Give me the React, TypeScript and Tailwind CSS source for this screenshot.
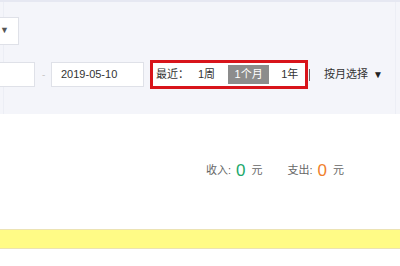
import React from 'react';

export default function App() {
  return (
    <div
      className="w-[400px] h-[266px] overflow-hidden bg-white text-[#333]"
      style={{ fontFamily: '"Liberation Sans", "Noto Sans CJK SC", sans-serif' }}
    >
      {/* Filter panel */}
      <div className="h-[114px] bg-[#f4f5fa] border-t-2 border-[#e6e8f2] pl-[3px] pr-[4px]">
        <div className="h-full border-x border-[#eceef5]">
          <div className="pt-[15px] flex">
            <div className="ml-[-47px] w-[62px] h-[28px] bg-white border border-[#dfe1e8] flex items-center justify-end pr-[9px]">
              <span className="text-[9px] text-[#555]">▼</span>
            </div>
          </div>

          <div className="mt-[15px] flex items-center">
            <div className="ml-[-40px] w-[71px] h-[25px] bg-white border border-[#dfe1e8]" />
            <span className="ml-[7px] w-[9px] text-[10px] text-[#c8c8c8]">-</span>
            <div className="w-[93px] h-[25px] bg-white border border-[#dfe1e8] flex items-center pl-[9px] text-[11px] text-[#333]">
              2019-05-10
            </div>
            <div className="ml-[6px] w-[158px] h-[29px] border-[3px] border-[#d8141b] bg-white flex items-center text-[11px]">
              <span className="ml-[3px] text-[#333]">最近：</span>
              <span className="ml-[9px] text-[#333]">1周</span>
              <span className="ml-[13px] w-[41px] h-[19px] bg-[#8c8c8c] text-white flex items-center justify-center">1个月</span>
              <span className="ml-[12px] text-[#333]">1年</span>
            </div>
            <span className="ml-[1px] w-[1px] h-[12px] bg-[#666]" />
            <span className="ml-[14px] text-[11px] text-[#333]">按月选择</span>
            <span className="ml-[5px] text-[10px] text-[#222]">▼</span>
          </div>
        </div>
      </div>

      {/* Summary */}
      <div className="mt-[48px] flex items-center justify-end pr-[56px] text-[11px] text-[#666]">
        <span>收入:</span>
        <span className="ml-[5px] text-[17px] leading-none text-[#21a86b]">0</span>
        <span className="ml-[6px]">元</span>
        <span className="ml-[25px]">支出:</span>
        <span className="ml-[5px] text-[17px] leading-none text-[#f0802c]">0</span>
        <span className="ml-[6px]">元</span>
      </div>

      {/* Notice bar */}
      <div className="mt-[50px] h-[20px] bg-[#fffb86] border-y border-[#ece3b4]" />
    </div>
  );
}
